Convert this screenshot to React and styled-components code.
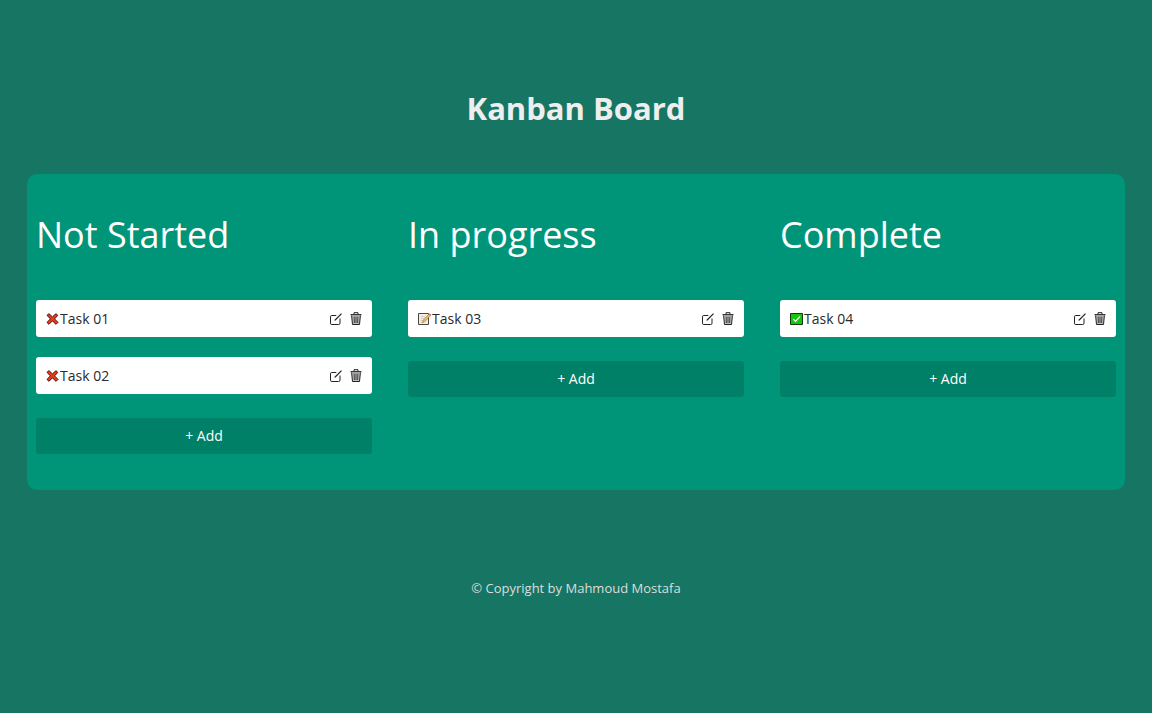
import React from "react";
import styled, { createGlobalStyle } from "styled-components";

const GlobalStyle = createGlobalStyle`
  *, *::before, *::after { box-sizing: border-box; }
  body {
    margin: 0;
    min-height: 100vh;
    background: #167663;
    color: #eeeeee;
    font-family: "Open Sans", sans-serif;
  }
`;

const Page = styled.div`
  padding: 84px 27px 40px;
`;

const Title = styled.h1`
  margin: 0 0 42px;
  font-size: 31px;
  line-height: 48px;
  font-weight: 700;
  text-align: center;
`;

const Board = styled.main`
  display: grid;
  grid-template-columns: repeat(3, 1fr);
  gap: 36px;
  padding: 36px 9px;
  border-radius: 10px;
  background: #009578;
`;

const ColumnTitle = styled.h2`
  margin: 0 0 40px;
  color: #ffffff;
  font-size: 36px;
  line-height: 50px;
  font-weight: 400;
`;

const TaskList = styled.ul`
  display: flex;
  flex-direction: column;
  gap: 20px;
  margin: 0 0 24px;
  padding: 0;
  list-style: none;
`;

const TaskCard = styled.li`
  display: flex;
  align-items: center;
  height: 37px;
  padding: 0 10px;
  border-radius: 3px;
  background: #ffffff;
  color: #2a2a2a;
`;

const TaskName = styled.span`
  flex: 1;
  font-size: 14px;
  line-height: 20px;
  font-weight: 400;
`;

const StatusSvg = styled.svg`
  display: block;
  flex: none;
  width: 14px;
  height: 14px;
`;

const Actions = styled.div`
  display: flex;
  gap: 8px;
`;

const IconButton = styled.button`
  display: flex;
  width: 12px;
  height: 15px;
  padding: 0;
  border: 0;
  background: none;
  color: #222222;
  cursor: pointer;
`;

const ActionSvg = styled.svg`
  display: block;
  width: 12px;
  height: 15px;
  fill: none;
  stroke: currentColor;
`;

const AddButton = styled.button`
  display: block;
  width: 100%;
  height: 36px;
  padding: 0;
  border: 0;
  border-radius: 3px;
  background: #008067;
  color: #ffffff;
  font-family: inherit;
  font-size: 14px;
  line-height: 20px;
  font-weight: 500;
  cursor: pointer;
`;

const Footer = styled.footer`
  margin-top: 88px;
  color: #dddddd;
  font-size: 13px;
  line-height: 20px;
  text-align: center;
`;

function StatusIcon({ status }) {
  return (
    <StatusSvg viewBox="0 0 14 14" aria-hidden="true">
      {status === "todo" && (
        <path
          d="M1 3.3 3 1.7 6.4 4.9 10 1.7 11.8 3.4 8.5 6.9 12 10.4 10.1 12.3 6.4 8.9 3 12.3 1 10.4 4.4 6.9Z"
          fill="#f03a17"
          stroke="#45100a"
          strokeWidth="1"
          strokeLinejoin="round"
        />
      )}
      {status === "doing" && (
        <>
          <path d="M.5 1.5H10.5V12.5H.5Z" fill="#f1ede7" stroke="#4a4743" />
          <path d="M2.5 4.5H7M2.5 6.5H6M2.5 8.5H5M2.5 10.5H4" stroke="#d5d0c9" />
          <path d="M4.3 10.8 5.3 8 11 2 12.7 3.6 6.8 9.6Z" fill="#fbb848" stroke="#6b4a22" strokeWidth=".4" />
          <path d="m10.7 2.2 1-1 1.6 1.5-1 1.2Z" fill="#d77968" />
        </>
      )}
      {status === "done" && (
        <>
          <path d="M.5 1.5H12.5V12.5H.5Z" fill="#16c60c" stroke="#12380f" />
          <path d="m3.3 7.2 2.2 2.2 4.6-5" fill="none" stroke="#ffffff" strokeWidth="1.2" />
        </>
      )}
    </StatusSvg>
  );
}

function EditIcon() {
  return (
    <ActionSvg viewBox="0 0 12 15" aria-hidden="true">
      <path d="M6.3 4.5H1.8Q.5 4.5.5 5.8V12.2Q.5 13.5 1.8 13.5H8.7Q10 13.5 10 12.2V7.5" />
      <path d="M5.2 9 11.5 2.7" strokeWidth="1.2" />
      <path d="m4.4 9.8.5-1.5 1 1Z" fill="currentColor" stroke="none" />
    </ActionSvg>
  );
}

function TrashIcon() {
  return (
    <ActionSvg viewBox="0 0 12 15" aria-hidden="true">
      <path d="M1.6 4.5 2.5 13.5H9.5L10.4 4.5" fill="#bdbdbd" />
      <path d="M.5 3.7H11.5" strokeWidth="1.2" />
      <path d="M4 3.3V1.7H8V3.3" />
      <path d="M4.1 5.5 4.4 12M6 5.5V12M7.9 5.5 7.6 12" strokeWidth=".8" />
    </ActionSvg>
  );
}

const columns = [
  { title: "Not Started", status: "todo", tasks: ["Task 01", "Task 02"] },
  { title: "In progress", status: "doing", tasks: ["Task 03"] },
  { title: "Complete", status: "done", tasks: ["Task 04"] },
];

function Task({ name, status }) {
  return (
    <TaskCard>
      <StatusIcon status={status} />
      <TaskName>{name}</TaskName>
      <Actions>
        <IconButton type="button" aria-label={`Edit ${name}`}>
          <EditIcon />
        </IconButton>
        <IconButton type="button" aria-label={`Delete ${name}`}>
          <TrashIcon />
        </IconButton>
      </Actions>
    </TaskCard>
  );
}

export default function App() {
  return (
    <>
      <GlobalStyle />
      <Page>
        <Title>Kanban Board</Title>
        <Board>
          {columns.map(({ title, status, tasks }) => (
            <section key={title}>
              <ColumnTitle>{title}</ColumnTitle>
              <TaskList>
                {tasks.map((name) => (
                  <Task key={name} name={name} status={status} />
                ))}
              </TaskList>
              <AddButton type="button">+ Add</AddButton>
            </section>
          ))}
        </Board>
        <Footer>© Copyright by Mahmoud Mostafa</Footer>
      </Page>
    </>
  );
}
